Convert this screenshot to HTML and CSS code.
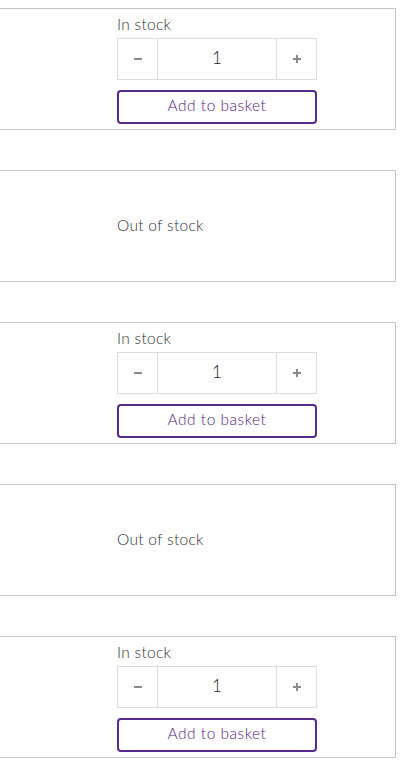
FILE: index.html
```html
<!DOCTYPE html>
<html>
<head>
<meta charset="utf-8">
<link rel="stylesheet" href="styles.css">
</head>
<body>
<div class="list">
  <div class="card">
    <div class="stock">In stock</div>
    <div class="qty">
      <span class="qbtn"><svg width="8" height="8" viewBox="0 0 8 8"><rect x="0" y="3" width="8" height="2" fill="#8a8a8a"/></svg></span>
      <span class="qval">1</span>
      <span class="qbtn"><svg width="8" height="8" viewBox="0 0 8 8"><rect x="0" y="3" width="8" height="2" fill="#8a8a8a"/><rect x="3" y="0" width="2" height="8" fill="#8a8a8a"/></svg></span>
    </div>
    <div class="add">Add to basket</div>
  </div>
  <div class="card out"><div class="outtext">Out of stock</div></div>
  <div class="card">
    <div class="stock">In stock</div>
    <div class="qty">
      <span class="qbtn"><svg width="8" height="8" viewBox="0 0 8 8"><rect x="0" y="3" width="8" height="2" fill="#8a8a8a"/></svg></span>
      <span class="qval">1</span>
      <span class="qbtn"><svg width="8" height="8" viewBox="0 0 8 8"><rect x="0" y="3" width="8" height="2" fill="#8a8a8a"/><rect x="3" y="0" width="2" height="8" fill="#8a8a8a"/></svg></span>
    </div>
    <div class="add">Add to basket</div>
  </div>
  <div class="card out"><div class="outtext">Out of stock</div></div>
  <div class="card">
    <div class="stock">In stock</div>
    <div class="qty">
      <span class="qbtn"><svg width="8" height="8" viewBox="0 0 8 8"><rect x="0" y="3" width="8" height="2" fill="#8a8a8a"/></svg></span>
      <span class="qval">1</span>
      <span class="qbtn"><svg width="8" height="8" viewBox="0 0 8 8"><rect x="0" y="3" width="8" height="2" fill="#8a8a8a"/><rect x="3" y="0" width="2" height="8" fill="#8a8a8a"/></svg></span>
    </div>
    <div class="add">Add to basket</div>
  </div>
</div>
</body>
</html>
```
FILE: styles.css
```css
html, body { margin: 0; padding: 0; background: #fff; }
body { font-family: Lato, "Liberation Sans", sans-serif; font-weight: 300; }
.list { padding-top: 8px; display: flex; flex-direction: column; gap: 40px; }
.card {
  width: 278px;
  border: 1px solid #c6c6c6;
  border-left: none;
  padding: 5px 0 5px 117px;
  display: flex;
  flex-direction: column;
}
.stock {
  height: 20px; line-height: 21px; font-size: 15.5px; color: #333;
  margin-bottom: 4px; letter-spacing: 0.3px;
}
.qty {
  width: 200px; height: 42px; box-sizing: border-box;
  border: 1px solid #dcdcdc;
  display: flex;
}
.qbtn {
  width: 39px; display: flex; align-items: center; justify-content: center;
  box-sizing: border-box;
}
.qbtn svg { display: block; }
.qval {
  flex: 1; display: flex; align-items: center; justify-content: center;
  border-left: 1px solid #dcdcdc; border-right: 1px solid #dcdcdc;
  color: #222; font-size: 17px; padding-bottom: 4px;
}
.add {
  margin-top: 10px; width: 200px; height: 34px; box-sizing: border-box;
  border: 2px solid #582a8c; border-radius: 4px;
  display: flex; align-items: center; justify-content: center;
  color: #52247f; font-size: 15.5px; letter-spacing: 0.5px; padding-bottom: 5px;
}
.card.out { height: 110px; padding-top: 0; padding-bottom: 0; justify-content: center; }
.outtext { font-size: 15.5px; color: #333; line-height: 20px; padding-bottom: 2px; letter-spacing: 0.3px; }
```
